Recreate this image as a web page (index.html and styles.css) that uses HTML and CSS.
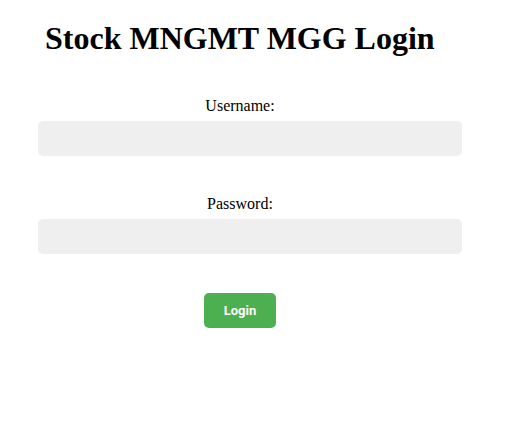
FILE: index.html
```html
<!DOCTYPE html>
<html>
<head>
<meta charset="utf-8">
<title>Stock MNGMT MGG Login</title>
<link rel="stylesheet" href="styles.css">
</head>
<body>
<h1 class="title">Stock MNGMT MGG Login</h1>
<form class="login-form">
  <div class="field">
    <label class="field-label" for="username">Username:</label>
    <input class="field-input" type="text" id="username" name="username">
  </div>
  <div class="field">
    <label class="field-label" for="password">Password:</label>
    <input class="field-input" type="password" id="password" name="password">
  </div>
  <button class="login-btn" type="submit">Login</button>
</form>
</body>
</html>
```
FILE: styles.css
```css
html, body {
  background: #ffffff;
}
body {
  margin: 8px;
  font-family: "Liberation Serif", "Times New Roman", serif;
  color: #000;
}
.title {
  font-family: "Liberation Serif", "Times New Roman", serif;
  font-size: 32px;
  font-weight: bold;
  margin: 12px 0 40px 37px;
}
.login-form {
  width: 404px;
  margin-left: 30px;
}
.field {
  margin-bottom: 39px;
}
.field-label {
  display: block;
  text-align: center;
  font-size: 16px;
  margin-bottom: 6px;
}
.field-input {
  display: block;
  box-sizing: content-box;
  width: 100%;
  height: 15px;
  padding: 10px;
  border: none;
  border-radius: 5px;
  background: #efefef;
  outline: none;
}
.login-btn {
  display: block;
  margin: 2px auto 0;
  width: 72px;
  height: 35px;
  border: none;
  border-radius: 5px;
  background: #4caf50;
  color: #fff;
  font-family: Roboto, "Liberation Sans", Arial, sans-serif;
  font-weight: bold;
  font-size: 13px;
  cursor: pointer;
}
```
